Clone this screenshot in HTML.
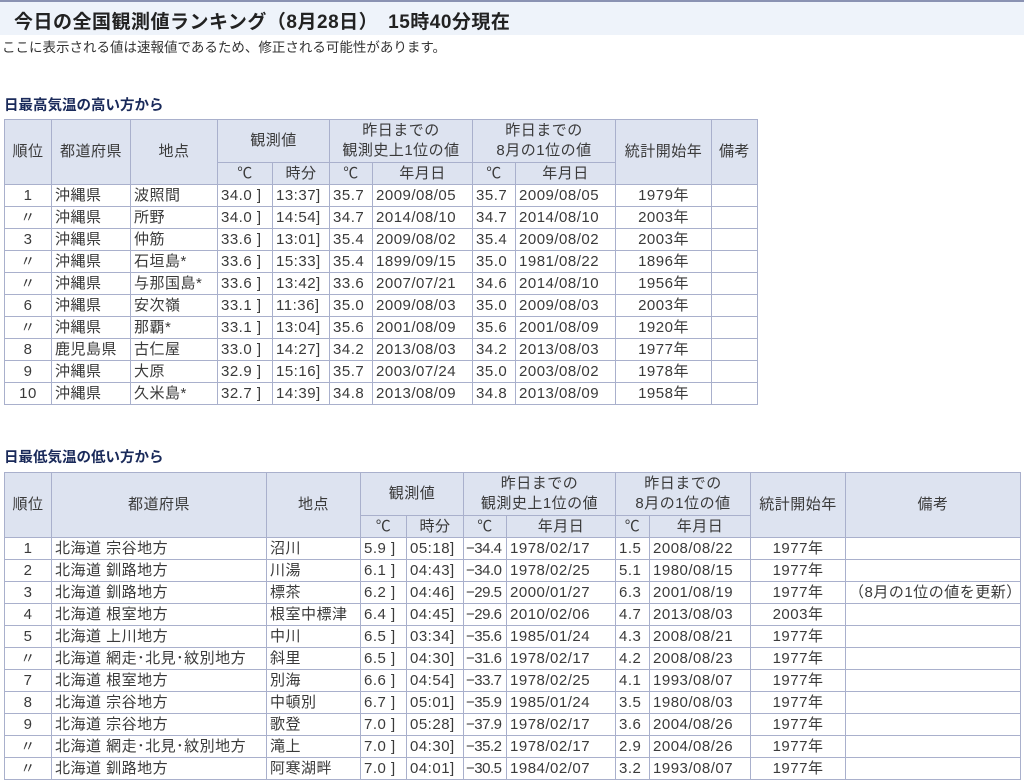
<!DOCTYPE html>
<html><head><meta charset="utf-8">
<style>
body{margin:0;width:1024px;height:784px;overflow:hidden;background:#fff;font-family:"Liberation Sans","Noto Sans CJK JP",sans-serif;color:#333;position:relative}
.bar{position:absolute;left:0;top:0;width:1024px;height:35px;background:#eef3fa;border-top:2px solid #8a92b2;box-sizing:border-box}
.bar h1{margin:0;position:absolute;left:14px;top:5px;font-size:19px;font-weight:bold;color:#222;letter-spacing:0.5px;white-space:nowrap}
.note{position:absolute;left:2px;top:36px;font-size:13.5px;color:#333;white-space:nowrap}
.cap{position:absolute;left:4px;font-size:14.5px;color:#1a2a5a;font-weight:bold;white-space:nowrap}
table{position:absolute;left:4px;border-collapse:collapse;table-layout:fixed;font-size:15px;letter-spacing:0.5px}
td,th{border:1px solid #a9b0cc;padding:0 3px;white-space:nowrap;overflow:hidden;font-weight:normal;color:#3a3a3a;line-height:20px}
th{background:#dde3f0;text-align:center}
tr.h1{height:43px}
tr.h2,tr.d{height:22px}
td.c{text-align:center}
td.n{letter-spacing:-0.5px;padding:0 1px 0 2px}
</style></head><body>
<div class="bar"><h1>今日の全国観測値ランキング（8月28日）　15時40分現在</h1></div>
<div class="note">ここに表示される値は速報値であるため、修正される可能性があります。</div>
<div class="cap" style="top:94px">日最高気温の高い方から</div>
<table style="top:119px;width:753px">
<colgroup><col style="width:47px"><col style="width:79px"><col style="width:87px"><col style="width:55px"><col style="width:57px"><col style="width:43px"><col style="width:100px"><col style="width:43px"><col style="width:100px"><col style="width:96px"><col style="width:46px"></colgroup>
<tr class="h1"><th rowspan="2">順位</th><th rowspan="2">都道府県</th><th rowspan="2">地点</th><th colspan="2">観測値</th><th colspan="2">昨日までの<br>観測史上1位の値</th><th colspan="2">昨日までの<br>8月の1位の値</th><th rowspan="2">統計開始年</th><th rowspan="2">備考</th></tr>
<tr class="h2"><th>℃</th><th>時分</th><th>℃</th><th>年月日</th><th>℃</th><th>年月日</th></tr>
<tr class="d"><td class="c">1</td><td>沖縄県</td><td>波照間</td><td>34.0 ]</td><td>13:37]</td><td>35.7</td><td>2009/08/05</td><td>35.7</td><td>2009/08/05</td><td class="c">1979年</td><td></td></tr>
<tr class="d"><td class="c">〃</td><td>沖縄県</td><td>所野</td><td>34.0 ]</td><td>14:54]</td><td>34.7</td><td>2014/08/10</td><td>34.7</td><td>2014/08/10</td><td class="c">2003年</td><td></td></tr>
<tr class="d"><td class="c">3</td><td>沖縄県</td><td>仲筋</td><td>33.6 ]</td><td>13:01]</td><td>35.4</td><td>2009/08/02</td><td>35.4</td><td>2009/08/02</td><td class="c">2003年</td><td></td></tr>
<tr class="d"><td class="c">〃</td><td>沖縄県</td><td>石垣島*</td><td>33.6 ]</td><td>15:33]</td><td>35.4</td><td>1899/09/15</td><td>35.0</td><td>1981/08/22</td><td class="c">1896年</td><td></td></tr>
<tr class="d"><td class="c">〃</td><td>沖縄県</td><td>与那国島*</td><td>33.6 ]</td><td>13:42]</td><td>33.6</td><td>2007/07/21</td><td>34.6</td><td>2014/08/10</td><td class="c">1956年</td><td></td></tr>
<tr class="d"><td class="c">6</td><td>沖縄県</td><td>安次嶺</td><td>33.1 ]</td><td>11:36]</td><td>35.0</td><td>2009/08/03</td><td>35.0</td><td>2009/08/03</td><td class="c">2003年</td><td></td></tr>
<tr class="d"><td class="c">〃</td><td>沖縄県</td><td>那覇*</td><td>33.1 ]</td><td>13:04]</td><td>35.6</td><td>2001/08/09</td><td>35.6</td><td>2001/08/09</td><td class="c">1920年</td><td></td></tr>
<tr class="d"><td class="c">8</td><td>鹿児島県</td><td>古仁屋</td><td>33.0 ]</td><td>14:27]</td><td>34.2</td><td>2013/08/03</td><td>34.2</td><td>2013/08/03</td><td class="c">1977年</td><td></td></tr>
<tr class="d"><td class="c">9</td><td>沖縄県</td><td>大原</td><td>32.9 ]</td><td>15:16]</td><td>35.7</td><td>2003/07/24</td><td>35.0</td><td>2003/08/02</td><td class="c">1978年</td><td></td></tr>
<tr class="d"><td class="c">10</td><td>沖縄県</td><td>久米島*</td><td>32.7 ]</td><td>14:39]</td><td>34.8</td><td>2013/08/09</td><td>34.8</td><td>2013/08/09</td><td class="c">1958年</td><td></td></tr>
</table>
<div class="cap" style="top:446px">日最低気温の低い方から</div>
<table style="top:472px;width:1016px">
<colgroup><col style="width:47px"><col style="width:215px"><col style="width:94px"><col style="width:46px"><col style="width:57px"><col style="width:43px"><col style="width:109px"><col style="width:34px"><col style="width:101px"><col style="width:95px"><col style="width:175px"></colgroup>
<tr class="h1"><th rowspan="2">順位</th><th rowspan="2">都道府県</th><th rowspan="2">地点</th><th colspan="2">観測値</th><th colspan="2">昨日までの<br>観測史上1位の値</th><th colspan="2">昨日までの<br>8月の1位の値</th><th rowspan="2">統計開始年</th><th rowspan="2">備考</th></tr>
<tr class="h2"><th>℃</th><th>時分</th><th>℃</th><th>年月日</th><th>℃</th><th>年月日</th></tr>
<tr class="d"><td class="c">1</td><td>北海道 宗谷地方</td><td>沼川</td><td>5.9 ]</td><td>05:18]</td><td class="n">−34.4</td><td>1978/02/17</td><td>1.5</td><td>2008/08/22</td><td class="c">1977年</td><td></td></tr>
<tr class="d"><td class="c">2</td><td>北海道 釧路地方</td><td>川湯</td><td>6.1 ]</td><td>04:43]</td><td class="n">−34.0</td><td>1978/02/25</td><td>5.1</td><td>1980/08/15</td><td class="c">1977年</td><td></td></tr>
<tr class="d"><td class="c">3</td><td>北海道 釧路地方</td><td>標茶</td><td>6.2 ]</td><td>04:46]</td><td class="n">−29.5</td><td>2000/01/27</td><td>6.3</td><td>2001/08/19</td><td class="c">1977年</td><td>（8月の1位の値を更新）</td></tr>
<tr class="d"><td class="c">4</td><td>北海道 根室地方</td><td>根室中標津</td><td>6.4 ]</td><td>04:45]</td><td class="n">−29.6</td><td>2010/02/06</td><td>4.7</td><td>2013/08/03</td><td class="c">2003年</td><td></td></tr>
<tr class="d"><td class="c">5</td><td>北海道 上川地方</td><td>中川</td><td>6.5 ]</td><td>03:34]</td><td class="n">−35.6</td><td>1985/01/24</td><td>4.3</td><td>2008/08/21</td><td class="c">1977年</td><td></td></tr>
<tr class="d"><td class="c">〃</td><td>北海道 網走･北見･紋別地方</td><td>斜里</td><td>6.5 ]</td><td>04:30]</td><td class="n">−31.6</td><td>1978/02/17</td><td>4.2</td><td>2008/08/23</td><td class="c">1977年</td><td></td></tr>
<tr class="d"><td class="c">7</td><td>北海道 根室地方</td><td>別海</td><td>6.6 ]</td><td>04:54]</td><td class="n">−33.7</td><td>1978/02/25</td><td>4.1</td><td>1993/08/07</td><td class="c">1977年</td><td></td></tr>
<tr class="d"><td class="c">8</td><td>北海道 宗谷地方</td><td>中頓別</td><td>6.7 ]</td><td>05:01]</td><td class="n">−35.9</td><td>1985/01/24</td><td>3.5</td><td>1980/08/03</td><td class="c">1977年</td><td></td></tr>
<tr class="d"><td class="c">9</td><td>北海道 宗谷地方</td><td>歌登</td><td>7.0 ]</td><td>05:28]</td><td class="n">−37.9</td><td>1978/02/17</td><td>3.6</td><td>2004/08/26</td><td class="c">1977年</td><td></td></tr>
<tr class="d"><td class="c">〃</td><td>北海道 網走･北見･紋別地方</td><td>滝上</td><td>7.0 ]</td><td>04:30]</td><td class="n">−35.2</td><td>1978/02/17</td><td>2.9</td><td>2004/08/26</td><td class="c">1977年</td><td></td></tr>
<tr class="d"><td class="c">〃</td><td>北海道 釧路地方</td><td>阿寒湖畔</td><td>7.0 ]</td><td>04:01]</td><td class="n">−30.5</td><td>1984/02/07</td><td>3.2</td><td>1993/08/07</td><td class="c">1977年</td><td></td></tr>
</table>
</body></html>
